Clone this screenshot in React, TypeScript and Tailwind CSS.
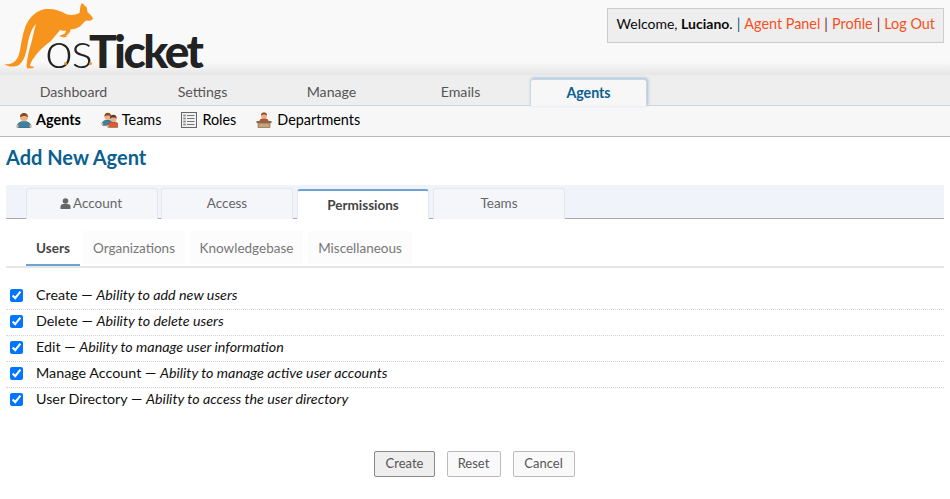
import React from "react";

const Kangaroo = () => (
  <svg width="96" height="70" viewBox="0 0 96 70" className="absolute left-0 top-0">
    <path fill="#f7941d" d="M4 64 C10 65 15 63 18 57 C21 50 21 40 24 31 C27 20 34 12 43 9.5 C51 8 60 10 67 14.5 C71 15.5 76 15 79.5 13 C80 9 80.5 5 81.5 3.5 C83 3 84.5 4.5 85 6.5 C86.5 5.5 87 8 87.5 12 C89.5 14 92 16 93 18.5 C92 20.5 90 21 87 20.5 C84 21 83 24 80 26.5 C77 28.5 73 29.5 70.5 29.5 C71 31 69.5 33 66 36 L68.5 35.8 L64 37.5 L59 36 L65 33.5 L66 30.5 C64 31.5 62 30.5 60 30 C58 33 54 37 50.5 41.5 C44 46 38 52 34.5 57 C32 60 30.5 63 30 66 L33 66.5 L34 68 L27 68.5 L26.5 65 C27.5 57 29 50 31 44 C33 37 34 30 36 24 C31 29 29 37 27.5 45 C26 54 24 61 19 65 C14 67.5 8 67 4 64 Z" />
  </svg>
);

const PersonIcon = ({ shirt = "#3f7f9f", hair = "#8a4a20" }: { shirt?: string; hair?: string }) => (
  <g>
    <path d="M1 15 C1 11 4 9.5 8 9.5 C12 9.5 15 11 15 15 L13.5 16 L2.5 16 Z" fill={shirt} stroke="#2b566b" strokeWidth="0.5" />
    <circle cx="8" cy="5.5" r="3.8" fill="#eab08a" />
    <path d="M4 5.5 C4 2 6 1 8 1 C10 1 12 2 12 5.5 C10.5 3.5 6 3.5 4 5.5 Z" fill={hair} />
    <rect x="0.5" y="13" width="2" height="2.5" fill="#eab08a" />
    <rect x="13.5" y="13" width="2" height="2.5" fill="#eab08a" />
  </g>
);

const AgentIcon = () => (
  <svg width="16" height="16" viewBox="0 0 16 16"><PersonIcon /></svg>
);

const TeamIcon = () => (
  <svg width="17" height="16" viewBox="0 0 17 16">
    <g transform="scale(0.85)"><PersonIcon /></g>
    <g transform="translate(5.5,2) scale(0.85)"><PersonIcon shirt="#e0592a" hair="#5a3a22" /></g>
  </svg>
);

const RolesIcon = () => (
  <svg width="16" height="16" viewBox="0 0 16 16">
    <rect x="0.5" y="0.5" width="15" height="15" fill="#f2f2f2" stroke="#666" />
    <rect x="2" y="2" width="3" height="12" fill="#cfcfcf" />
    <path d="M6 3.5H13.5M6 6.5H13.5M6 9.5H13.5M6 12.5H13.5" stroke="#777" />
    <path d="M2.5 3.5H4.5M2.5 6.5H4.5M2.5 9.5H4.5M2.5 12.5H4.5" stroke="#888" />
  </svg>
);

const DeptIcon = () => (
  <svg width="16" height="16" viewBox="0 0 16 16">
    <circle cx="8" cy="3.8" r="3" fill="#eab08a" />
    <path d="M5 3.5 C5 1 6.5 0.5 8 0.5 C9.5 0.5 11 1 11 3.5 C9.5 2.2 6.5 2.2 5 3.5 Z" fill="#9a4f1e" />
    <path d="M3.5 9 C3.5 7 5.5 6.5 8 6.5 C10.5 6.5 12.5 7 12.5 9 Z" fill="#b5562a" />
    <rect x="0.5" y="9" width="15" height="2" fill="#8a6a4a" />
    <rect x="2" y="11" width="12" height="4.5" fill="#c9a27c" stroke="#7a5c40" strokeWidth="0.6" />
  </svg>
);

const UserGlyph = () => (
  <svg width="11" height="11" viewBox="0 0 11 11">
    <circle cx="5.5" cy="3" r="2.8" fill="#666" />
    <path d="M0.5 11 V8.5 C0.5 6.8 2 6 3.5 6 H7.5 C9 6 10.5 6.8 10.5 8.5 V11 Z" fill="#666" />
  </svg>
);

const perms: [string, string][] = [
  ["Create", "Ability to add new users"],
  ["Delete", "Ability to delete users"],
  ["Edit", "Ability to manage user information"],
  ["Manage Account", "Ability to manage active user accounts"],
  ["User Directory", "Ability to access the user directory"],
];

const mainTabs = ["Dashboard", "Settings", "Manage", "Emails"];

export default function App() {
  return (
    <div className="h-[499px] w-[950px] overflow-hidden bg-white font-['Lato',sans-serif] text-[14.4px] text-black">
      <header className="relative flex h-[75px] justify-end bg-[linear-gradient(to_bottom,#f9f9f9_0,#f9f9f9_62px,#e6e6e6_75px)] pr-[6px] pt-2">
        <Kangaroo />
        <div className="absolute left-[45px] top-[25px] flex items-baseline leading-[48px] text-[#222]">
          <span className="w-[44px] shrink-0 text-[50px] font-light tracking-[-1.5px]">os</span>
          <span className="text-[46px] font-black tracking-[-2.5px]">Ticket</span>
        </div>
        <span className="absolute left-[64px] top-[62px] h-[3px] w-[3px] rounded-full bg-[#f7941d]" />
        <span className="absolute left-[89px] top-[62px] h-[3px] w-[3px] rounded-full bg-[#f7941d]" />
        <div className="flex h-[35px] items-center border border-[#ccc] bg-[#eee] pb-[4px] pl-[9px] pr-[8px] text-[#0a0a0a]">
          <span className="text-[14px]">Welcome, <b>Luciano</b>.</span>
          <span className="mx-[4px] text-[#0a5a8a]">|</span>
          <span className="text-[#f4511e]">Agent Panel</span>
          <span className="mx-[4px] text-[#7a1f3a]">|</span>
          <span className="text-[#f4511e]">Profile</span>
          <span className="mx-[4px] text-[#7a1f3a]">|</span>
          <span className="text-[#f4511e]">Log Out</span>
        </div>
      </header>

      <nav className="flex h-[31px] items-end border-b border-[#c5d9e8] bg-[#eeeeee] pl-[9px]">
        {mainTabs.map((t) => (
          <div key={t} className="flex h-[30px] w-[129px] items-center justify-center pt-[4px] text-[14.2px] text-[#555]">{t}</div>
        ))}
        <div className="ml-[5px] -mb-px flex h-[27px] w-[117px] items-center justify-center rounded-t-[3px] border border-b-0 border-[#c5d9e8] bg-[#f7f7f7] text-[14.2px] font-bold text-[#0a6090] shadow-[1px_-1px_3px_rgba(90,140,190,0.5)]">Agents</div>
      </nav>

      <div className="flex h-[31px] items-center gap-[20px] border-b border-[#bbb] bg-[#f7f7f7] pb-[2px] pl-[16px]">
        <div className="flex items-center gap-[4px] font-bold"><AgentIcon /><span>Agents</span></div>
        <div className="flex items-center gap-[4px]"><TeamIcon /><span>Teams</span></div>
        <div className="flex items-center gap-[5px]"><RolesIcon /><span>Roles</span></div>
        <div className="flex items-center gap-[5px]"><DeptIcon /><span>Departments</span></div>
      </div>

      <div className="px-[6px]">
        <h1 className="mt-[6px] h-[42px] text-[20px] font-bold leading-[28px] text-[#0a6090]">Add New Agent</h1>

        <div className="flex h-[34px] items-end border-b border-[#aaa] bg-[#f0f4fa] pl-[20px]">
          <div className="-mb-px flex h-[31px] w-[132px] items-center justify-center gap-[2px] rounded-t-[3px] border border-b-0 border-[#e4e8ee] bg-[#f4f6fa] pb-[2px] pr-[2px] text-[13.5px] text-[#666]"><UserGlyph />Account</div>
          <div className="-mb-px ml-[3px] flex h-[31px] w-[132px] items-center justify-center rounded-t-[3px] border border-b-0 border-[#e4e8ee] bg-[#f4f6fa] pb-[2px] text-[13.5px] text-[#666]">Access</div>
          <div className="-mb-px ml-[4px] flex h-[30px] w-[132px] items-center justify-center rounded-t-[3px] border border-b-0 border-t-2 border-[#e4e8ee] border-t-[#6fa3d4] bg-white text-[13.5px] font-bold text-[#444]">Permissions</div>
          <div className="-mb-px ml-[4px] flex h-[31px] w-[132px] items-center justify-center rounded-t-[3px] border border-b-0 border-[#e4e8ee] bg-[#f4f6fa] pb-[2px] text-[13.5px] text-[#666]">Teams</div>
        </div>

        <div className="mt-[12px] flex h-[37px] items-start border-b-2 border-[#e6e6e6] pl-[20px] text-[13.5px]">
          <div className="flex h-[35px] w-[54px] items-center justify-center border-b-2 border-[#6fa3d4] pt-[1px] font-bold text-[#444]">Users</div>
          <div className="ml-[3px] flex h-[33px] w-[102px] items-center justify-center bg-[#fcfcfc] pt-[2px] text-[#777]">Organizations</div>
          <div className="ml-[5px] flex h-[33px] w-[113px] items-center justify-center bg-[#fcfcfc] pt-[2px] text-[#777]">Knowledgebase</div>
          <div className="ml-[5px] flex h-[33px] w-[104px] items-center justify-center bg-[#fcfcfc] pt-[2px] text-[#777]">Miscellaneous</div>
        </div>

        <div className="mt-[16px]">
          {perms.map(([a, b], i) => (
            <div key={a} className={`flex h-[26px] items-center gap-[13px] border-b border-dotted pb-[3px] pl-[4px] ${i < 4 ? "border-[#d5d5d5]" : "border-transparent"}`}>
              <input type="checkbox" defaultChecked className="m-0 h-[13px] w-[13px]" />
              <span className="text-[14.3px] text-[#111]">{a} — <i>{b}</i></span>
            </div>
          ))}
        </div>

        <div className="mt-[37px] flex justify-center gap-[12px] pr-[2px] text-[13px] text-[#555]">
          <div className="flex h-[26px] w-[61px] items-center justify-center rounded-[2px] border border-[#888] bg-[#eee] pl-[1px]">Create</div>
          <div className="flex h-[26px] w-[54px] items-center justify-center rounded-[2px] border border-[#bbb] bg-[#f9f9f9]">Reset</div>
          <div className="flex h-[26px] w-[62px] items-center justify-center rounded-[2px] border border-[#bbb] bg-[#f9f9f9]">Cancel</div>
        </div>
      </div>
    </div>
  );
}
